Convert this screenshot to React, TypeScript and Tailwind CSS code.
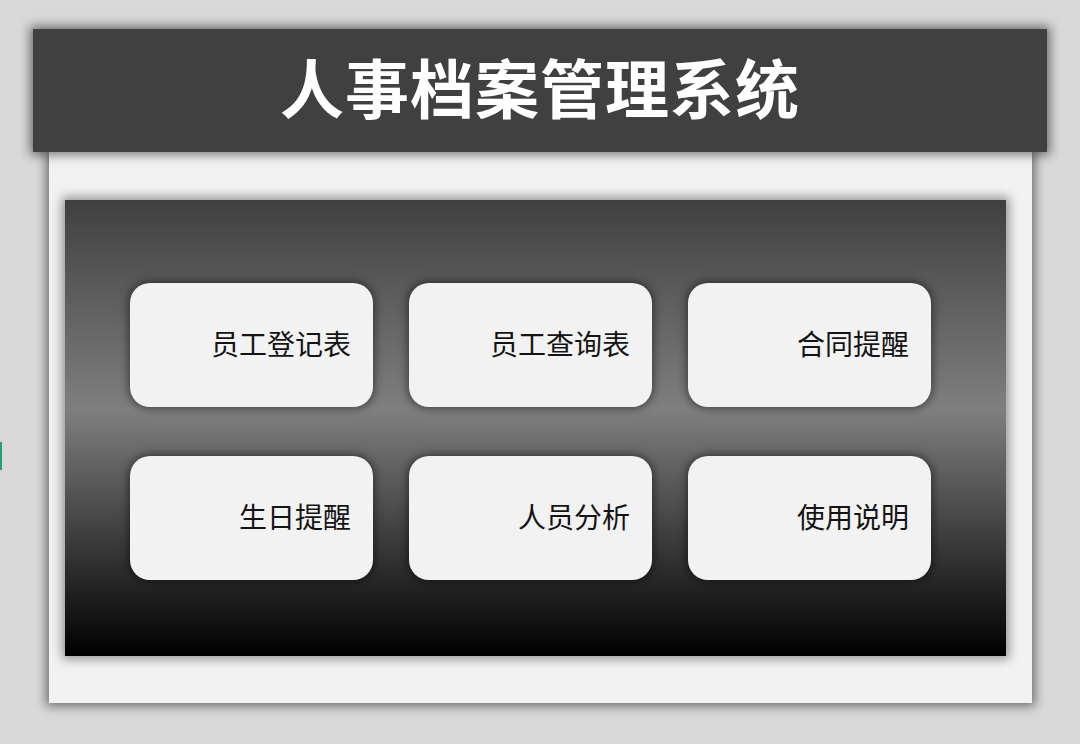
const menu = ["员工登记表", "员工查询表", "合同提醒", "生日提醒", "人员分析", "使用说明"];

export default function App() {
  return (
    <div
      className="relative h-[744px] w-[1080px] overflow-hidden bg-[#d9d9d9] pt-[29px]"
      style={{ fontFamily: '"Noto Sans CJK SC", "Noto Sans", sans-serif' }}
    >
      <span className="absolute left-0 top-[442px] h-[28px] w-[2px] bg-[#1e9f74]" />

      <header className="relative z-10 ml-[33px] flex h-[123px] w-[1014px] items-center justify-center bg-[#404040] pb-[12px] shadow-[0_0_10px_3px_rgba(0,0,0,0.5)]">
        <h1 className="text-[64px] font-bold leading-none tracking-[1px] text-white">人事档案管理系统</h1>
      </header>

      <main className="ml-[49px] h-[551px] w-[983px] bg-[#f2f2f2] pb-[47px] pl-[16px] pr-[26px] pt-[48px] shadow-[0_0_10px_3px_rgba(0,0,0,0.5)]">
        <section className="h-full w-full bg-[linear-gradient(to_bottom,#404040_0%,#7f7f7f_46%,#000000_100%)] pl-[65px] pt-[83px] shadow-[0_0_10px_3px_rgba(0,0,0,0.4)]">
          <div className="grid grid-cols-[243px_243px_243px] gap-x-[36px] gap-y-[49px]">
            {menu.map((m) => (
              <button
                key={m}
                className="flex h-[124px] items-center justify-end rounded-[20px] bg-[#f2f2f2] pb-[4px] pr-[22px] text-[28px] leading-none text-[#141414] shadow-[0_0_8px_2px_rgba(0,0,0,0.45)]"
              >
                {m}
              </button>
            ))}
          </div>
        </section>
      </main>
    </div>
  );
}
